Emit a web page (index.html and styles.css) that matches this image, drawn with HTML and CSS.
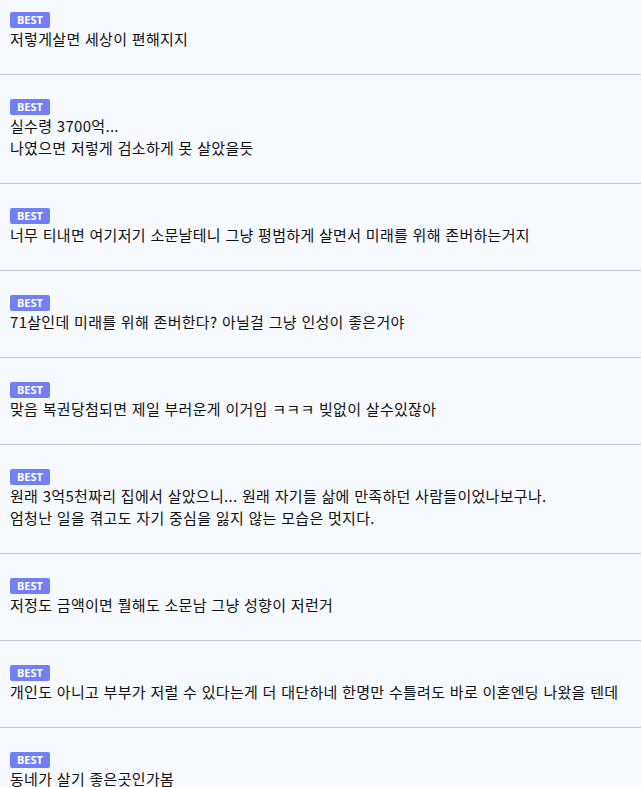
FILE: index.html
```html
<!DOCTYPE html>
<html lang="ko">
<head>
<meta charset="utf-8">
<link rel="stylesheet" href="styles.css">
</head>
<body>
<ul class="list">
  <li class="item first"><span class="badge">BEST</span><p class="text">저렇게살면 세상이 편해지지</p></li>
  <li class="item"><span class="badge">BEST</span><p class="text">실수령 3700억...<br>나였으면 저렇게 검소하게 못 살았을듯</p></li>
  <li class="item"><span class="badge">BEST</span><p class="text">너무 티내면 여기저기 소문날테니 그냥 평범하게 살면서 미래를 위해 존버하는거지</p></li>
  <li class="item"><span class="badge">BEST</span><p class="text">71살인데 미래를 위해 존버한다? 아닐걸 그냥 인성이 좋은거야</p></li>
  <li class="item"><span class="badge">BEST</span><p class="text">맞음 복권당첨되면 제일 부러운게 이거임 ㅋㅋㅋ 빚없이 살수있잖아</p></li>
  <li class="item"><span class="badge">BEST</span><p class="text">원래 3억5천짜리 집에서 살았으니... 원래 자기들 삶에 만족하던 사람들이었나보구나.<br>엄청난 일을 겪고도 자기 중심을 잃지 않는 모습은 멋지다.</p></li>
  <li class="item"><span class="badge">BEST</span><p class="text">저정도 금액이면 뭘해도 소문남 그냥 성향이 저런거</p></li>
  <li class="item"><span class="badge">BEST</span><p class="text">개인도 아니고 부부가 저럴 수 있다는게 더 대단하네 한명만 수틀려도 바로 이혼엔딩 나왔을 텐데</p></li>
  <li class="item"><span class="badge">BEST</span><p class="text">동네가 살기 좋은곳인가봄</p></li>
</ul>
</body>
</html>
```
FILE: styles.css
```css
html, body {
  margin: 0;
  padding: 0;
  background: #f6f9fe;
}
body {
  font-family: "Noto Sans CJK KR", "Noto Sans", sans-serif;
  font-size: 15px;
  color: #111;
}
.list {
  list-style: none;
  margin: 0;
  padding: 0;
}
.item {
  padding: 24px 10px 24px;
  border-bottom: 1px solid #c9c9cb;
}
.item.first {
  padding-top: 12px;
}
.badge {
  display: block;
  height: 16px;
  width: 40px;
  line-height: 16px;
  background: #7180f4;
  color: #fff;
  font-family: "Noto Sans", sans-serif;
  font-weight: 700;
  font-size: 11px;
  text-align: center;
  border-radius: 2px;
}
.text {
  margin: 0;
  line-height: 22px;
  letter-spacing: 0.3px;
  white-space: nowrap;
}
```
